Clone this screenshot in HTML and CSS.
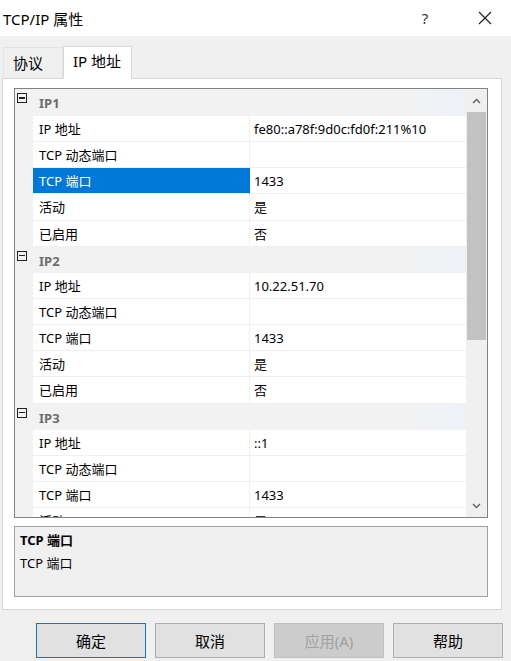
FILE: index.html
```html
<!DOCTYPE html>
<html lang="zh">
<head>
<meta charset="utf-8">
<title>TCP/IP 属性</title>
<link rel="stylesheet" href="styles.css">
</head>
<body>
<div class="titlebar">
  <span class="title">TCP/IP 属性</span>
  <span class="help">?</span>
  <span class="close">
    <svg width="14" height="14" viewBox="0 0 14 14"><path d="M1 1L13 13M13 1L1 13" stroke="#1a1a1a" stroke-width="1.1" fill="none"/></svg>
  </span>
</div>
<div class="tabs">
  <div class="tab">协议</div>
  <div class="tab active">IP 地址</div>
</div>
<div class="panel">
  <div class="grid">
    <div class="rows">
      <div class="row head"><span class="gut"><i class="box"></i></span><span class="hname">IP1</span></div>
      <div class="row"><span class="gut"></span><span class="lab">IP 地址</span><span class="val">fe80::a78f:9d0c:fd0f:211%10</span></div>
      <div class="row"><span class="gut"></span><span class="lab">TCP 动态端口</span><span class="val"></span></div>
      <div class="row"><span class="gut"></span><span class="lab sel">TCP 端口</span><span class="val">1433</span></div>
      <div class="row"><span class="gut"></span><span class="lab">活动</span><span class="val">是</span></div>
      <div class="row"><span class="gut"></span><span class="lab">已启用</span><span class="val">否</span></div>
      <div class="row head"><span class="gut"><i class="box"></i></span><span class="hname">IP2</span></div>
      <div class="row"><span class="gut"></span><span class="lab">IP 地址</span><span class="val">10.22.51.70</span></div>
      <div class="row"><span class="gut"></span><span class="lab">TCP 动态端口</span><span class="val"></span></div>
      <div class="row"><span class="gut"></span><span class="lab">TCP 端口</span><span class="val">1433</span></div>
      <div class="row"><span class="gut"></span><span class="lab">活动</span><span class="val">是</span></div>
      <div class="row"><span class="gut"></span><span class="lab">已启用</span><span class="val">否</span></div>
      <div class="row head"><span class="gut"><i class="box"></i></span><span class="hname">IP3</span></div>
      <div class="row"><span class="gut"></span><span class="lab">IP 地址</span><span class="val">::1</span></div>
      <div class="row"><span class="gut"></span><span class="lab">TCP 动态端口</span><span class="val"></span></div>
      <div class="row"><span class="gut"></span><span class="lab">TCP 端口</span><span class="val">1433</span></div>
      <div class="row"><span class="gut"></span><span class="lab">活动</span><span class="val">是</span></div>
    </div>
    <div class="scrollbar">
      <div class="arrow">
        <svg width="9" height="6" viewBox="0 0 9 6"><path d="M1 5L4.5 1.5L8 5" stroke="#606060" stroke-width="1.4" fill="none"/></svg>
      </div>
      <div class="track"><div class="thumb"></div></div>
      <div class="arrow">
        <svg width="9" height="6" viewBox="0 0 9 6"><path d="M1 1L4.5 4.5L8 1" stroke="#606060" stroke-width="1.4" fill="none"/></svg>
      </div>
    </div>
  </div>
  <div class="desc">
    <div class="dtitle">TCP 端口</div>
    <div class="dtext">TCP 端口</div>
  </div>
</div>
<div class="buttons">
  <button class="btn default">确定</button>
  <button class="btn">取消</button>
  <button class="btn disabled">应用(A)</button>
  <button class="btn">帮助</button>
</div>
</body>
</html>
```
FILE: styles.css
```css
* { box-sizing: border-box; }
html, body { margin: 0; padding: 0; }
body {
  width: 511px;
  height: 661px;
  overflow: hidden;
  background: #f0f0f0;
  font-family: "Noto Sans", "Noto Sans CJK SC", sans-serif;
  color: #000;
}
.titlebar {
  height: 36px;
  background: #fff;
  display: flex;
  align-items: center;
  padding-left: 3px;
}
.title {
  font-size: 15px;
  flex: 1;
  color: #000;
}
.help {
  font-size: 15px;
  color: #333;
  width: 16px;
  margin-right: 45px;
  text-align: center;
}
.close {
  width: 14px;
  height: 14px;
  margin-right: 19px;
  display: flex;
}
.tabs {
  display: flex;
  align-items: flex-end;
  height: 42px;
  padding-left: 3px;
}
.tab {
  font-size: 15px;
  height: 31px;
  line-height: 30px;
  padding: 0 9px;
  width: 60px;
  border: 1px solid #e3e3e3;
  border-bottom: none;
  background: #f0f0f0;
}
.tab.active {
  background: #fff;
  height: 33px;
  line-height: 28px;
  width: 69px;
  margin-bottom: -1px;
  position: relative;
  z-index: 1;
  border-color: #d9d9d9;
}
.panel {
  margin-left: 2px;
  width: 500px;
  height: 532px;
  background: #fff;
  border: 1px solid #d9d9d9;
  padding: 9px 13px 0 11px;
}
.grid {
  height: 430px;
  border: 1px solid #828282;
  display: flex;
  overflow: hidden;
}
.rows {
  flex: 1;
  display: flex;
  flex-direction: column;
  font-size: 13px;
}
.row {
  height: 26.15px;
  flex: none;
  display: flex;
}
.row:first-child { height: 27px; }
.gut {
  width: 18px;
  background: #f2f2f2;
  flex: none;
  position: relative;
}
.box {
  position: absolute;
  left: 2px;
  top: 4px;
  width: 10px;
  height: 10px;
  border: 1.5px solid #222;
}
.box::after {
  content: "";
  position: absolute;
  left: 1px;
  right: 1px;
  top: 3px;
  height: 1.5px;
  background: #222;
}
.head {
  background: linear-gradient(to right, #f2f2f2 85%, #eef2f8);
}
.head .gut { background: transparent; }
.hname {
  font-weight: bold;
  color: #6d6d6d;
  padding-left: 6px;
  line-height: 28px;
  font-size: 13px;
}
.lab {
  width: 217px;
  flex: none;
  padding-left: 6px;
  line-height: 26px;
  border-bottom: 1px solid #f0f0f0;
  border-right: 1px solid #f0f0f0;
  color: #000;
}
.lab.sel {
  background: #0078d7;
  color: #fff;
  border-right-color: #0078d7;
}
.val {
  flex: 1;
  padding-left: 4px;
  line-height: 26px;
  border-bottom: 1px solid #f0f0f0;
}
.scrollbar {
  width: 21px;
  flex: none;
  background: #f0f0f0;
  display: flex;
  flex-direction: column;
}
.arrow {
  height: 23px;
  display: flex;
  align-items: center;
  justify-content: center;
}
.track {
  flex: 1;
}
.thumb {
  height: 228px;
  margin: 0 1px;
  background: #c2c2c2;
}
.desc {
  margin-top: 8px;
  height: 71px;
  background: #f0f0f0;
  border: 1px solid #a0a0a0;
  padding: 3px 5px;
  font-size: 13px;
}
.dtitle {
  font-weight: bold;
  line-height: 20px;
}
.dtext {
  line-height: 20px;
  margin-top: 3px;
}
.buttons {
  display: flex;
  gap: 9px;
  padding-left: 36px;
  margin-top: 13px;
}
.btn {
  width: 110px;
  height: 35px;
  border: 1px solid #adadad;
  background: #e1e1e1;
  font-family: inherit;
  font-size: 15px;
  color: #000;
  padding: 0;
}
.btn.default {
  border-color: #0078d7;
}
.btn.disabled {
  background: #cccccc;
  border-color: #bfbfbf;
  color: #a0a0a0;
}
```
